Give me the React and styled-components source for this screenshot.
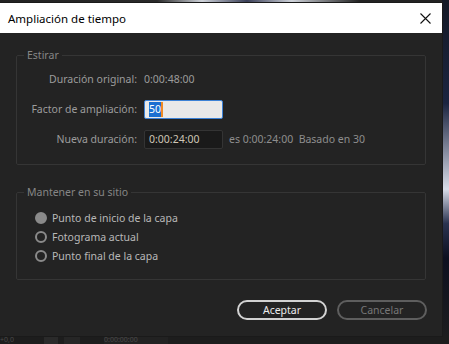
import React from "react";
import styled, { createGlobalStyle } from "styled-components";

const Global = createGlobalStyle`
  html, body { margin: 0; padding: 0; background: #141414; }
  body { width: 449px; height: 344px; overflow: hidden; font-family: "Noto Sans", "Open Sans", sans-serif; }
`;

const Backdrop = styled.div`
  position: relative;
  width: 449px;
  height: 344px;
  overflow: hidden;
  background: linear-gradient(180deg, #0f1522 0%, #121212 60%, #1c1c1c 100%);
`;

const Scene = styled.div`
  position: absolute;
  right: 0;
  top: 0;
  width: 7px;
  height: 344px;
  background: linear-gradient(180deg, #151a26 0%, #1b2440 30%, #d8dce8 55%, #2a3350 65%, #0d1020 75%, #1e1e1e 100%);
`;

const TopStrip = styled.div`
  height: 3px;
  background: linear-gradient(90deg, #222 0%, #2a2a2a 35%, #cfd3da 45%, #3a3f58 55%, #cfd3da 65%, #222 80%);
`;

const BottomStrip = styled.div`
  position: absolute;
  left: 0;
  bottom: 0;
  width: 449px;
  height: 8px;
  display: flex;
  align-items: stretch;
  background: #1d1d1d;
  font-size: 7px;
  line-height: 7px;
  color: #4a4a4a;
`;

const StripCell = styled.div`
  width: ${(p) => p.$w}px;
  margin-left: ${(p) => p.$ml || 0}px;
  background: ${(p) => p.$bg || "transparent"};
  padding-left: ${(p) => p.$pl || 0}px;
  box-sizing: border-box;
  white-space: nowrap;
`;

const Dialog = styled.div`
  position: relative;
  width: 442px;
  height: 333px;
  background: #232323;
  display: flex;
  flex-direction: column;
  z-index: 1;
  box-shadow: 0 0 0 1px #1a1a1a;
`;

const TitleBar = styled.div`
  height: 30px;
  background: #ffffff;
  display: flex;
  align-items: center;
  justify-content: space-between;
  padding: 0 8px 0 8px;
  font-family: "Noto Sans", sans-serif;
  font-size: 11.5px;
  color: #000;
`;

const Close = styled.svg`
  width: 11px;
  height: 11px;
  margin-right: 3px;
`;

const Body = styled.div`
  padding: 15px 16px 0 16px;
  display: flex;
  flex-direction: column;
`;

const Group = styled.fieldset`
  margin: ${(p) => p.$top}px 0 0 0;
  padding: ${(p) => p.$pad};
  border: 1px solid #353535;
  border-radius: 2px;
  min-width: 0;
`;

const Legend = styled.legend`
  margin-left: 7px;
  padding: 0 3px;
  font-size: 10.5px;
  line-height: 14px;
  color: #868686;
`;

const FieldGrid = styled.div`
  display: grid;
  grid-template-columns: 120px auto;
  column-gap: 7px;
  row-gap: 11px;
  align-items: center;
`;

const Label = styled.div`
  text-align: right;
  font-size: 10.5px;
  line-height: 19px;
  color: #9c9c9c;
  white-space: nowrap;
`;

const Value = styled.div`
  display: flex;
  align-items: center;
  gap: 6px;
  font-size: 10.5px;
  line-height: 19px;
  color: #9c9c9c;
  white-space: nowrap;
`;

const Input = styled.div`
  box-sizing: border-box;
  width: 79px;
  height: 19px;
  padding: 0 4px;
  display: flex;
  align-items: center;
  font-size: 10.5px;
  border-radius: 2px;
  background: ${(p) => (p.$focus ? "#e9e9e9" : "#1a1a1a")};
  border: 1px solid ${(p) => (p.$focus ? "#3d82d6" : "#343434")};
  color: ${(p) => (p.$focus ? "#000" : "#cfc6b6")};
`;

const Selected = styled.span`
  background: #1a6fd1;
  color: #fff;
  line-height: 15px;
  border-right: 2px solid #f08a24;
`;

const Extra = styled.span`
  color: #8e8e8e;
`;

const Radios = styled.div`
  display: flex;
  flex-direction: column;
  gap: 1px;
  padding-left: 18px;
`;

const RadioRow = styled.div`
  display: flex;
  align-items: center;
  gap: 5px;
  height: 18px;
  font-size: 10.5px;
  color: #b8b8b8;
`;

const RadioDot = styled.span`
  box-sizing: border-box;
  width: 12px;
  height: 12px;
  border-radius: 50%;
  border: 2px solid #8a8a8a;
  background: ${(p) => (p.$on ? "#8a8a8a" : "transparent")};
`;

const Footer = styled.div`
  display: flex;
  justify-content: flex-end;
  gap: 10px;
  padding: 20px 15px 0 0;
`;

const Button = styled.div`
  box-sizing: border-box;
  width: 90px;
  height: 20px;
  border-radius: 10px;
  display: flex;
  align-items: center;
  justify-content: center;
  font-size: 10.5px;
  border: 2px solid ${(p) => (p.$primary ? "#d2d2d2" : "#5e5e5e")};
  color: ${(p) => (p.$primary ? "#ececec" : "#777777")};
`;

export default function App() {
  return (
    <>
      <Global />
      <Backdrop>
        <TopStrip />
        <Scene />
        <Dialog>
          <TitleBar>
            <span>Ampliación de tiempo</span>
            <Close viewBox="0 0 11 11">
              <path d="M0.5 0.5 L10.5 10.5 M10.5 0.5 L0.5 10.5" stroke="#111" strokeWidth="1.1" />
            </Close>
          </TitleBar>
          <Body>
            <Group $top={0} $pad="8px 0 15px 0">
              <Legend>Estirar</Legend>
              <FieldGrid>
                <Label>Duración original:</Label>
                <Value>0:00:48:00</Value>
                <Label>Factor de ampliación:</Label>
                <Input $focus>
                  <Selected>50</Selected>
                </Input>
                <Label>Nueva duración:</Label>
                <Value>
                  <Input>0:00:24:00</Input>
                  <Extra>es 0:00:24:00&nbsp;&nbsp;Basado en 30</Extra>
                </Value>
              </FieldGrid>
            </Group>
            <Group $top={20} $pad="10px 0 14px 0">
              <Legend>Mantener en su sitio</Legend>
              <Radios>
                <RadioRow>
                  <RadioDot $on />
                  Punto de inicio de la capa
                </RadioRow>
                <RadioRow>
                  <RadioDot />
                  Fotograma actual
                </RadioRow>
                <RadioRow>
                  <RadioDot />
                  Punto final de la capa
                </RadioRow>
              </Radios>
            </Group>
          </Body>
          <Footer>
            <Button $primary>Aceptar</Button>
            <Button>Cancelar</Button>
          </Footer>
        </Dialog>
        <BottomStrip>
          <StripCell $w={36}>+0,0</StripCell>
          <StripCell $w={14} $ml={8} $bg="#2a2a2a" />
          <StripCell $w={16} $ml={6} $bg="#262626" />
          <StripCell $w={64} $ml={24} $bg="#222222">0:00:00:00</StripCell>
        </BottomStrip>
      </Backdrop>
    </>
  );
}
